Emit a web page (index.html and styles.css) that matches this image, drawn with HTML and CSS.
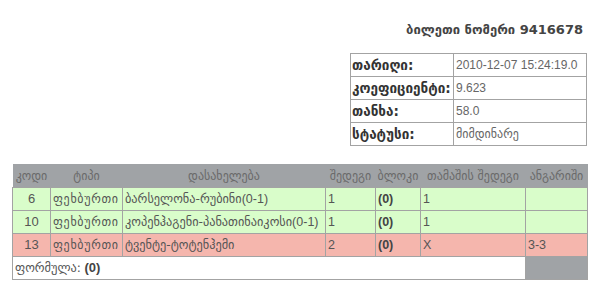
FILE: index.html
```html
<!DOCTYPE html>
<html>
<head>
<meta charset="utf-8">
<link rel="stylesheet" href="styles.css">
</head>
<body>
<div class="page">
  <div class="title"><span class="ka">ბილეთი ნომერი</span> 9416678</div>
  <table class="info">
    <colgroup><col class="i1"><col class="i2"></colgroup>
    <tr><td class="lbl">თარიღი:</td><td class="val">2010-12-07 15:24:19.0</td></tr>
    <tr><td class="lbl">კოეფიციენტი:</td><td class="val">9.623</td></tr>
    <tr><td class="lbl">თანხა:</td><td class="val">58.0</td></tr>
    <tr><td class="lbl">სტატუსი:</td><td class="val"><span class="ka">მიმდინარე</span></td></tr>
  </table>
  <table class="bets">
    <colgroup>
      <col class="c1"><col class="c2"><col class="c3"><col class="c4"><col class="c5"><col class="c6"><col class="c7">
    </colgroup>
    <tr class="head">
      <th>კოდი</th><th>ტიპი</th><th>დასახელება</th><th>შედეგი</th><th>ბლოკი</th><th>თამაშის შედეგი</th><th>ანგარიში</th>
    </tr>
    <tr class="win">
      <td class="code">6</td><td><span class="sport">ფეხბურთი</span></td><td><span class="ka">ბარსელონა-რუბინი</span>(0-1)</td><td>1</td><td class="b">(0)</td><td>1</td><td></td>
    </tr>
    <tr class="win">
      <td class="code">10</td><td><span class="sport">ფეხბურთი</span></td><td><span class="ka">კოპენჰაგენი-პანათინაიკოსი</span>(0-1)</td><td>1</td><td class="b">(0)</td><td>1</td><td></td>
    </tr>
    <tr class="lose">
      <td class="code">13</td><td><span class="sport">ფეხბურთი</span></td><td><span class="ka">ტვენტე-ტოტენჰემი</span></td><td>2</td><td class="b">(0)</td><td>X</td><td>3-3</td>
    </tr>
    <tr class="foot">
      <td colspan="6" class="formula"><span class="ka">ფორმულა:</span> <b>(0)</b></td><td class="gray"></td>
    </tr>
  </table>
</div>
</body>
</html>
```
FILE: styles.css
```css
html, body {
  margin: 0;
  padding: 0;
  background: #fff;
}
body {
  font-family: "Liberation Sans", "DejaVu Sans", sans-serif;
  font-size: 12px;
  color: #555;
}
.ka {
  font-family: "DejaVu Sans", sans-serif;
  font-size: 12.3px;
}
.sport {
  font-family: "DejaVu Sans", sans-serif;
  font-size: 12px;
  letter-spacing: 0.7px;
}
.page {
  width: 575px;
  margin-left: 12px;
  padding-top: 20px;
}
.title {
  text-align: right;
  font-family: "DejaVu Sans", sans-serif;
  font-weight: bold;
  font-size: 13px;
  color: #444;
  padding-right: 4px;
  height: 20px;
  line-height: 20px;
}
.title .ka {
  font-size: 13px;
}
.info {
  border-collapse: collapse;
  margin-left: auto;
  margin-top: 13px;
  width: 236px;
  table-layout: fixed;
}
.i1 { width: 103px; }
.i2 { width: 133px; }
.info td {
  border: 1px solid #a3a3a3;
  height: 22px;
  padding: 0 2px;
  white-space: nowrap;
  line-height: 16px;
}
.info .lbl {
  font-family: "DejaVu Sans", sans-serif;
  font-size: 13.5px;
  font-weight: bold;
  color: #333;
  padding-left: 1px;
}
.info .val {
  font-size: 12px;
  color: #666;
}
.info .val .ka {
  font-size: 12px;
}
.bets {
  border-collapse: collapse;
  width: 575px;
  margin-top: 18px;
  table-layout: fixed;
}
.c1 { width: 38px; }
.c2 { width: 72px; }
.c3 { width: 203px; }
.c4 { width: 50px; }
.c5 { width: 45px; }
.c6 { width: 105px; }
.c7 { width: 62px; }
.bets th {
  background: #a0a3a6;
  color: #6a6a6a;
  font-family: "DejaVu Sans", sans-serif;
  font-size: 12px;
  font-weight: normal;
  height: 23px;
  padding: 0;
  white-space: nowrap;
  overflow: visible;
  text-align: center;
}
.bets td {
  border: 1px solid #a3a3a3;
  height: 22px;
  padding: 0 2px;
  white-space: nowrap;
  overflow: hidden;
  color: #555;
  line-height: 16px;
  font-size: 12.5px;
}
.bets td.code { text-align: center; font-size: 13px; }
.bets td.b { font-weight: bold; color: #444; font-size: 12.5px; }
.win td { background: #d9fdca; }
.lose td { background: #f5b6ad; }
.foot td.formula { background: #fff; }
.foot td.gray { background: #a0a3a6; }
.foot b { color: #444; font-size: 13px; }
```
